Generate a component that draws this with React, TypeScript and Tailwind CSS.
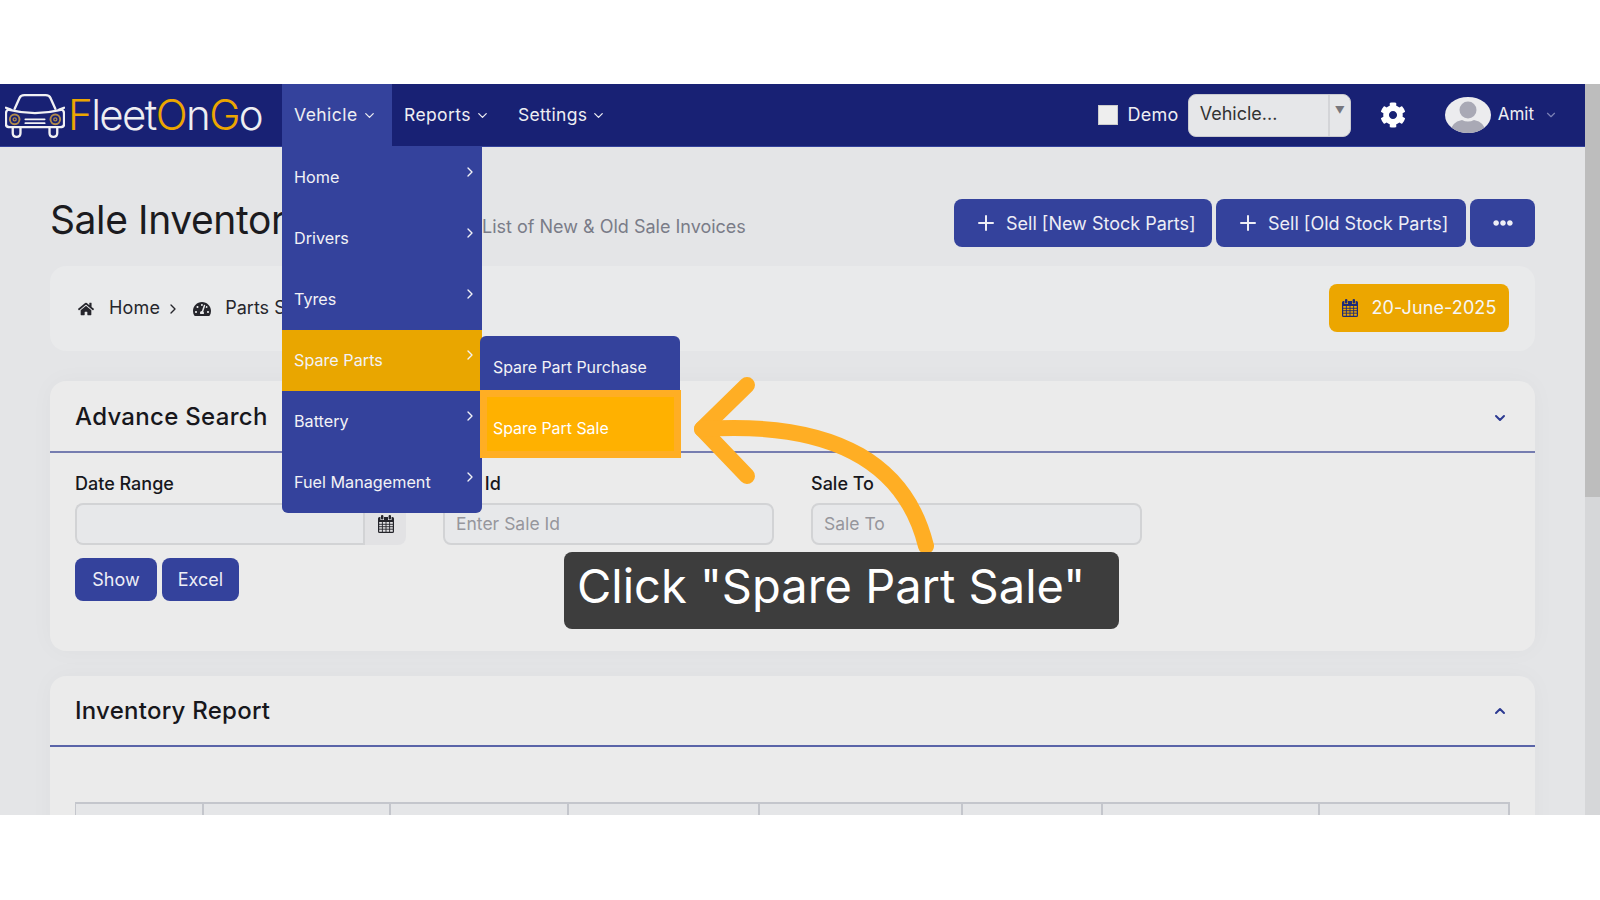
import { ChevronDown, ChevronRight, ChevronUp, Plus } from 'lucide-react';
import { FaCog, FaEllipsisH, FaHome, FaTachometerAlt } from 'react-icons/fa';

const menuItems = ['Home', 'Drivers', 'Tyres', 'Spare Parts', 'Battery', 'Fuel Management'];
const tableColumns = ['w-[128px]', 'w-[187px]', 'w-[178px]', 'w-[191px]', 'w-[203px]', 'w-[140px]', 'w-[217px]', 'flex-1'];

function CarLogo() {
  return (
    <svg viewBox="0 0 62 46" className="ml-[1px] h-[45px] w-[60px] shrink-0" fill="none" stroke="#f1f1f4" strokeWidth="2.4" strokeLinecap="round" strokeLinejoin="round">
      <path d="M10 16 L15 5 Q16 2 20 2 H42 Q46 2 47 5 L52 16" />
      <path d="M3 17 Q1 18 1 21 V32 Q1 35 5 35 H57 Q61 35 61 32 V21 Q61 18 59 17" />
      <path d="M3 17 Q31 24 59 17" />
      <path d="M1 15 L6 17 M61 15 L56 17" />
      <path d="M21 27 H41 M21 31 H41" strokeWidth="1.8" />
      <path d="M8 35 V41 Q8 45 12 45 Q16 45 16 41 V35 M46 35 V41 Q46 45 50 45 Q54 45 54 41 V35" />
      <circle cx="10" cy="27" r="5" stroke="#b08a4a" strokeWidth="2" />
      <circle cx="10" cy="27" r="1.6" stroke="#b08a4a" strokeWidth="1.4" />
      <circle cx="52" cy="27" r="5" stroke="#b08a4a" strokeWidth="2" />
      <circle cx="52" cy="27" r="1.6" stroke="#b08a4a" strokeWidth="1.4" />
    </svg>
  );
}

function Avatar() {
  return (
    <svg viewBox="0 0 46 36" className="h-[36px] w-[46px]">
      <ellipse cx="23" cy="18" rx="23" ry="18" fill="#ececee" />
      <clipPath id="avatar-clip">
        <ellipse cx="23" cy="18" rx="23" ry="18" />
      </clipPath>
      <g clipPath="url(#avatar-clip)" fill="#a9a9b5">
        <ellipse cx="23" cy="13" rx="8.5" ry="8.5" />
        <path d="M5 36 Q6 25 17 23 Q23 26 29 23 Q40 25 41 36 Z" />
      </g>
    </svg>
  );
}

// old font-awesome calendar: rings on top, grid body
function CalendarIcon({ className }: { className: string }) {
  return (
    <svg viewBox="0 0 16 18" className={className} fill="currentColor">
      <rect x="3" y="0" width="2.4" height="4.5" rx="1" />
      <rect x="10.6" y="0" width="2.4" height="4.5" rx="1" />
      <path d="M1.5 2 H2.4 V5 H6 V2 H10 V5 H13.6 V2 H14.5 Q16 2 16 3.5 V16.5 Q16 18 14.5 18 H1.5 Q0 18 0 16.5 V3.5 Q0 2 1.5 2 Z M1.2 7 V16.8 H14.8 V7 Z" />
      <path d="M1 9.3 H15 M1 11.7 H15 M1 14.2 H15 M4.4 7 V17 M8 7 V17 M11.6 7 V17" stroke="currentColor" strokeWidth="0.9" />
    </svg>
  );
}

function Field({ label, placeholder }: { label: string; placeholder: string }) {
  return (
    <div className="w-[331px]">
      <div className="h-[24px] text-[18px] leading-[26px] font-medium text-[#17171c]">{label}</div>
      <input
        readOnly
        placeholder={placeholder}
        className="mt-[8px] h-[42px] w-full rounded-lg border-2 border-[#d2d3d5] bg-[#e7e8ea] px-[11px] pb-[1px] text-[17.5px] outline-none placeholder:text-[#96969c]"
      />
    </div>
  );
}

export default function App() {
  return (
    <div className="flex h-[900px] w-[1600px] flex-col overflow-hidden bg-white font-['Inter',sans-serif]">
      <div className="h-[84px]" />
      <div className="flex h-[731px] overflow-hidden">
        <div className="relative w-[1585px] overflow-hidden bg-[#e4e5e7]">
          {/* Top nav */}
          <header className="flex h-[63px] items-start border-b border-[#34429c] bg-[#182174] text-[#eeeef2]">
            <div className="flex h-[62px] w-[282px] items-center pl-[4px]">
              <CarLogo />
              <span className="ml-[3px] text-[42px] leading-none font-light tracking-[-1.6px]">
                <span className="text-[#eca600]">F</span>leet<span className="text-[#eca600]">O</span>n<span className="text-[#eca600]">G</span>o
              </span>
            </div>

            <div className="relative flex h-[62px] w-[110px] items-center gap-[4px] bg-[#34429c] pl-[12px]">
              <span className="text-[17.5px] tracking-[0.45px]">Vehicle</span>
              <ChevronDown className="h-[15px] w-[15px]" />

              {/* Dropdown */}
              <div className="absolute top-[63px] left-0 z-20 w-[200px] rounded-b-md bg-[#34429c] text-[#f2f2f6]">
                {menuItems.map((item) => (
                  <div key={item} className={`relative flex h-[61px] items-center justify-between pr-[4px] pl-[12px] text-[16.2px] ${item === 'Spare Parts' ? 'bg-[#e9a600]' : ''}`}>
                    <span>{item}</span>
                    <ChevronRight className="h-[16px] w-[16px] -translate-y-[6px]" />
                    {item === 'Spare Parts' && (
                      <div className="absolute top-[6px] left-[198px] w-[201px] text-[15.9px]">
                        <div className="flex h-[54px] w-[200px] items-center rounded-t-md bg-[#34429c] pt-[10px] pl-[13px]">Spare Part Purchase</div>
                        <div className="flex h-[68px] items-center border-[7px] border-[#ffae24] bg-[#ffb100] pt-[10px] pl-[6px] text-white">Spare Part Sale</div>
                      </div>
                    )}
                  </div>
                ))}
              </div>
            </div>

            <div className="flex h-[62px] items-center gap-[4px] pl-[12px]">
              <span className="text-[17.5px] tracking-[0.4px]">Reports</span>
              <ChevronDown className="h-[15px] w-[15px]" />
            </div>
            <div className="flex h-[62px] items-center gap-[4px] pl-[28px]">
              <span className="text-[17.5px] tracking-[0.3px]">Settings</span>
              <ChevronDown className="h-[15px] w-[15px]" />
            </div>

            <div className="ml-auto flex h-[62px] items-center">
              <div className="h-[20px] w-[20px] border border-[#ccc] bg-[#eeeeee]" />
              <span className="ml-[9px] pb-[1px] text-[18px] tracking-[0.3px]">Demo</span>
              <div className="ml-[9px] flex h-[43px] w-[163px] rounded-lg border border-[#c9cad0] bg-[#e6e7e9] text-[#333]">
                <span className="flex-1 pl-[11px] text-[18px] leading-[37px]">Vehicle...</span>
                <div className="flex w-[22px] justify-center border-l-2 border-[#d4d5d8] pt-[10px] text-[10px] leading-none text-[#77777d]">▼</div>
              </div>
              <FaCog className="mr-[39px] ml-[29px] h-[26px] w-[26px] text-white" />
              <Avatar />
              <span className="ml-[7px] text-[17px]">Amit</span>
              <ChevronDown className="mr-[27px] ml-[10px] h-[14px] w-[14px] text-[#7b81b6]" />
            </div>
          </header>

          <main className="px-[50px] pt-[52px]">
            {/* Title row */}
            <div className="flex h-[48px] items-center">
              <h1 className="w-[432px] pb-[8px] text-[39px] leading-none tracking-[-0.4px] whitespace-nowrap text-[#1b1b20]">Sale Inventory</h1>
              <span className="mt-[6px] text-[18px] text-[#7a7c88]">List of New &amp; Old Sale Invoices</span>
              <div className="ml-auto flex gap-[4px] text-[18px] text-[#eeeef6]">
                <button className="flex h-[48px] w-[258px] items-center gap-[8px] rounded-lg bg-[#34429c] pl-[20px]">
                  <Plus className="h-[24px] w-[24px]" />
                  Sell [New Stock Parts]
                </button>
                <button className="flex h-[48px] w-[250px] items-center gap-[8px] rounded-lg bg-[#34429c] pl-[20px]">
                  <Plus className="h-[24px] w-[24px]" />
                  Sell [Old Stock Parts]
                </button>
                <button className="flex h-[48px] w-[65px] items-center justify-center rounded-lg bg-[#34429c]">
                  <FaEllipsisH className="h-[20px] w-[20px]" />
                </button>
              </div>
            </div>

            {/* Breadcrumb */}
            <div className="mt-[19px] flex h-[85px] items-center rounded-2xl bg-[#e9eaeb] pr-[26px] pl-[28px] text-[18px] text-[#26262c]">
              <FaHome className="h-[16px] w-[16px]" />
              <span className="ml-[15px] pb-[2px] tracking-[0.2px]">Home</span>
              <ChevronRight className="ml-[5px] h-[16px] w-[16px]" />
              <FaTachometerAlt className="ml-[12px] h-[18px] w-[18px]" />
              <span className="ml-[14px] pb-[2px]">Parts Sale</span>
              <div className="-mt-[2px] ml-auto flex h-[48px] w-[180px] items-center justify-center gap-[14px] rounded-lg bg-[#eca600] text-[18px] text-[#f6f6f6]">
                <CalendarIcon className="h-[18px] w-[16px] text-[#1e2a78]" />
                <span className="tracking-[0.1px]">20-June-2025</span>
              </div>
            </div>

            {/* Advance search */}
            <section className="mt-[30px] h-[270px] rounded-2xl bg-[#ebebeb] shadow-[0_0_24px_rgba(0,0,0,0.03)]">
              <div className="flex h-[72px] items-center justify-between border-b-2 border-[#767db0] px-[25px]">
                <h2 className="pt-[1px] text-[24px] font-medium tracking-[0.3px] text-[#17171c]">Advance Search</h2>
                <ChevronDown className="h-[16px] w-[16px] -translate-x-[2px] translate-y-[2px] text-[#2c3a92]" strokeWidth={3} />
              </div>
              <div className="px-[25px] pt-[18px]">
                <div className="flex gap-[37px]">
                  <div className="w-[331px]">
                    <div className="h-[24px] text-[18px] leading-[26px] font-medium text-[#17171c]">Date Range</div>
                    <div className="mt-[8px] flex h-[42px]">
                      <div className="w-[288px] rounded-l-lg border-2 border-r-0 border-[#d2d3d5] bg-[#e7e8ea]" />
                      <div className="flex w-[43px] items-center justify-center rounded-r-lg border-l-2 border-[#d2d3d5] bg-[#e2e2e4]">
                        <CalendarIcon className="h-[18px] w-[16px] text-[#24242a]" />
                      </div>
                    </div>
                  </div>
                  <Field label="Sale Id" placeholder="Enter Sale Id" />
                  <Field label="Sale To" placeholder="Sale To" />
                </div>
                <div className="mt-[13px] flex gap-[5px] text-[18px] text-[#eeeef6]">
                  <button className="h-[43px] w-[82px] rounded-lg bg-[#34429c]">Show</button>
                  <button className="h-[43px] w-[77px] rounded-lg bg-[#34429c]">Excel</button>
                </div>
              </div>
            </section>

            {/* Inventory report */}
            <section className="mt-[25px] h-[200px] rounded-t-2xl bg-[#ebebeb] shadow-[0_0_24px_rgba(0,0,0,0.03)]">
              <div className="flex h-[71px] items-center justify-between border-b-2 border-[#5a64a8] px-[25px]">
                <h2 className="text-[24px] font-medium tracking-[0.25px] text-[#17171c]">Inventory Report</h2>
                <ChevronUp className="h-[16px] w-[16px] -translate-x-[2px] text-[#2c3a92]" strokeWidth={3} />
              </div>
              <div className="mx-[25px] mt-[55px] flex h-[40px] border-t-2 border-l border-[#c4c6cc] bg-[#e5e6e8]">
                {tableColumns.map((col, i) => (
                  <div key={i} className={`${col} border-r-2 border-[#c4c6cc]`} />
                ))}
              </div>
            </section>
          </main>

          {/* Tutorial arrow */}
          <svg className="pointer-events-none absolute top-0 left-0 z-30 h-[731px] w-[1585px]" fill="none" stroke="#ffae24" strokeWidth="16" strokeLinecap="round" strokeLinejoin="round">
            <path d="M747 301 L702 345 L747 392" />
            <path d="M926 462 C907 385 842 336 702 345" />
          </svg>

          {/* Tutorial caption */}
          <div className="absolute top-[468px] left-[564px] z-40 flex h-[77px] w-[555px] items-center rounded-lg bg-[#3d3d3d] pb-[8px] pl-[13px] text-[47px] whitespace-nowrap text-white">
            Click "Spare Part Sale"
          </div>
        </div>

        {/* Scrollbar */}
        <div className="flex w-[15px] flex-col bg-[#d6d7d9]">
          <div className="h-[413px] bg-[#bdbdbd]" />
        </div>
      </div>
    </div>
  );
}
